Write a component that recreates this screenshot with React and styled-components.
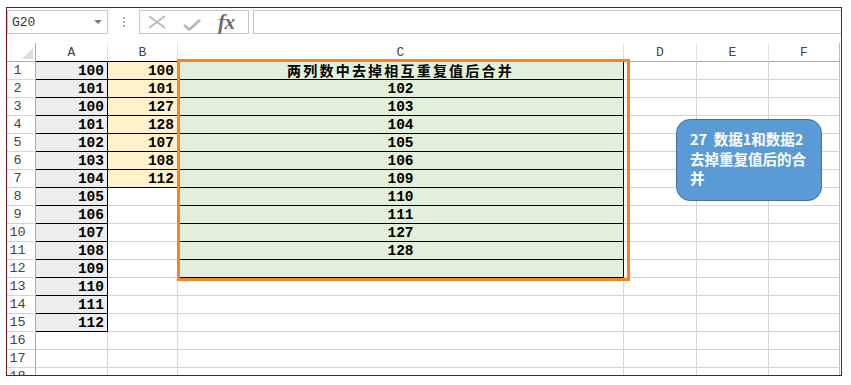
import React from "react";
import styled, { createGlobalStyle } from "styled-components";

const GlobalStyle = createGlobalStyle`
  html, body { margin: 0; padding: 0; background: #ffffff; }
  body { font-family: "Liberation Sans", Arial, sans-serif; }
`;

const colA = [100, 101, 100, 101, 102, 103, 104, 105, 106, 107, 108, 109, 110, 111, 112];
const colB = [100, 101, 127, 128, 107, 108, 112];
const colC = ["两列数中去掉相互重复值后合并", 102, 103, 104, 105, 106, 109, 110, 111, 127, 128, ""];
const letters = ["A", "B", "C", "D", "E", "F"];
const ROWS = 18;

const Frame = styled.div`
  position: relative;
  box-sizing: border-box;
  width: 836px;
  height: 369px;
  margin: 7px 0 0 6px;
  border: 1px solid #7a1212;
  overflow: hidden;
  background: #ffffff;
`;

const FormulaBar = styled.div`
  display: flex;
  height: 24px;
  margin: 2px 0 9px;
`;

const NameBox = styled.div`
  box-sizing: border-box;
  width: 101px;
  display: flex;
  align-items: center;
  justify-content: space-between;
  padding: 0 5px 0 4px;
  border: 1px solid #c6c6c6;
  font-family: "Liberation Mono", monospace;
  font-size: 13px;
  color: #333;
`;

const DropArrow = styled.span`
  width: 0;
  height: 0;
  border-left: 4px solid transparent;
  border-right: 4px solid transparent;
  border-top: 4px solid #7a7a7a;
`;

const Grip = styled.div`
  width: 31px;
  display: flex;
  flex-direction: column;
  align-items: center;
  justify-content: center;
  gap: 2px;

  span {
    width: 2px;
    height: 2px;
    background: #a8a8a8;
  }
`;

const FxBox = styled.div`
  box-sizing: border-box;
  width: 110px;
  display: flex;
  align-items: center;
  padding-left: 8px;
  border: 1px solid #c6c6c6;
`;

const FxMark = styled.span`
  margin-left: 17px;
  font-family: "Liberation Serif", serif;
  font-style: italic;
  font-weight: bold;
  font-size: 21px;
  color: #6a6a6a;
  letter-spacing: -0.5px;
  line-height: 1;
`;

const FormulaInput = styled.div`
  flex: 1;
  margin-left: 4px;
  border: 1px solid #c6c6c6;
  border-right: none;
`;

const Sheet = styled.div`
  display: grid;
  grid-template-columns: 29px 72px 70px 446px 73px 72px 71px 1px;
  grid-template-rows: 19px;
  grid-auto-rows: 18px;
`;

const Corner = styled.div`
  box-sizing: border-box;
  display: flex;
  align-items: flex-end;
  justify-content: flex-end;
  padding: 0 2px 2px 0;
  border-right: 1px solid #ababab;
  border-bottom: 1px solid #ababab;

  span {
    width: 0;
    height: 0;
    border-left: 11px solid transparent;
    border-bottom: 11px solid #dcdcdc;
  }
`;

const ColHead = styled.div`
  box-sizing: border-box;
  display: flex;
  align-items: center;
  justify-content: center;
  border-right: 1px solid ${(p) => p.$edge || "#e1e1e1"};
  border-bottom: 1px solid ${(p) => (p.$dark ? "#000000" : "#ababab")};
  font-family: "Liberation Mono", monospace;
  font-size: 13px;
  color: #444;
`;

const RowHead = styled.div`
  box-sizing: border-box;
  display: flex;
  align-items: center;
  justify-content: center;
  padding-right: 7px;
  border-right: 1px solid #ababab;
  border-bottom: 1px solid #d4d4d4;
  font-family: "Liberation Mono", monospace;
  font-size: 13.5px;
  color: #444;
`;

const Cell = styled.div`
  box-sizing: border-box;
  display: flex;
  align-items: center;
  justify-content: ${(p) => (p.$center ? "center" : "flex-end")};
  padding: 0 3px;
  white-space: nowrap;
  background: ${(p) => p.$fill || "#ffffff"};
  border-right: 1px solid ${(p) => p.$edge || "#d4d4d4"};
  border-bottom: 1px solid ${(p) => p.$under || "#d4d4d4"};
  font-family: "Liberation Mono", monospace;
  font-weight: bold;
  font-size: 14.5px;
  color: #000;
`;

const Title = styled.span`
  font-family: "Noto Sans CJK SC", sans-serif;
  font-size: 14px;
  letter-spacing: 2.2px;
  line-height: 17px;
`;

const Selection = styled.div`
  position: absolute;
  left: 170px;
  top: 51px;
  box-sizing: border-box;
  width: 453px;
  height: 222px;
  border: 3px solid #f5832b;
  pointer-events: none;
`;

const Callout = styled.div`
  position: absolute;
  left: 669px;
  top: 111px;
  box-sizing: border-box;
  width: 146px;
  height: 82px;
  padding: 9px 10px 0 13px;
  background: #5b9bd5;
  border: 1px solid #41719c;
  border-radius: 14px;
  color: #ffffff;
  font-family: "Noto Sans CJK SC", sans-serif;
  font-weight: bold;
  font-size: 14.5px;
  line-height: 19.5px;
  white-space: pre-wrap;
`;

const BLACK = "#000000";

function renderRow(r) {
  const a = colA[r - 1];
  const b = colB[r - 1];
  const c = colC[r - 1];
  const inA = a !== undefined;
  const inB = b !== undefined;
  const inC = c !== undefined;
  return (
    <React.Fragment key={r}>
      <RowHead>{r}</RowHead>
      <Cell $fill={inA ? "#ededed" : null} $edge={inA ? BLACK : null} $under={inA ? BLACK : null}>
        {a}
      </Cell>
      <Cell $fill={inB ? "#fff2cc" : null} $edge={inB ? BLACK : null} $under={inB ? BLACK : null}>
        {b}
      </Cell>
      <Cell $center $fill={inC ? "#e2efda" : null} $edge={inC ? BLACK : null} $under={inC ? BLACK : null}>
        {r === 1 ? <Title>{c}</Title> : c}
      </Cell>
      <Cell />
      <Cell />
      <Cell $edge="#bdbdbd" />
      <div />
    </React.Fragment>
  );
}

const App = () => {
  const rows = [];
  for (let r = 1; r <= ROWS; r++) rows.push(renderRow(r));

  return (
    <>
      <GlobalStyle />
      <Frame>
        <FormulaBar>
          <NameBox>
            G20
            <DropArrow />
          </NameBox>
          <Grip>
            <span />
            <span />
            <span />
          </Grip>
          <FxBox>
            <svg width="18" height="14" viewBox="0 0 18 14">
              <path d="M1 1 L17 13 M17 1 L1 13" stroke="#b8b8b8" strokeWidth="1.6" fill="none" />
            </svg>
            <svg width="18" height="12" viewBox="0 0 18 12" style={{ marginLeft: 17, marginTop: 5 }}>
              <path d="M1 6 L6.5 10.5 L17 1" stroke="#b8b8b8" strokeWidth="2.8" fill="none" />
            </svg>
            <FxMark>fx</FxMark>
          </FxBox>
          <FormulaInput />
        </FormulaBar>

        <Sheet>
          <Corner>
            <span />
          </Corner>
          {letters.map((l, i) => (
            <ColHead key={l} $dark={i < 3} $edge={i === 5 ? "#bdbdbd" : null}>
              {l}
            </ColHead>
          ))}
          <div />
          {rows}
        </Sheet>

        <Selection />
        <Callout>{"27  数据1和数据2\n去掉重复值后的合并"}</Callout>
      </Frame>
    </>
  );
};

export default App;
